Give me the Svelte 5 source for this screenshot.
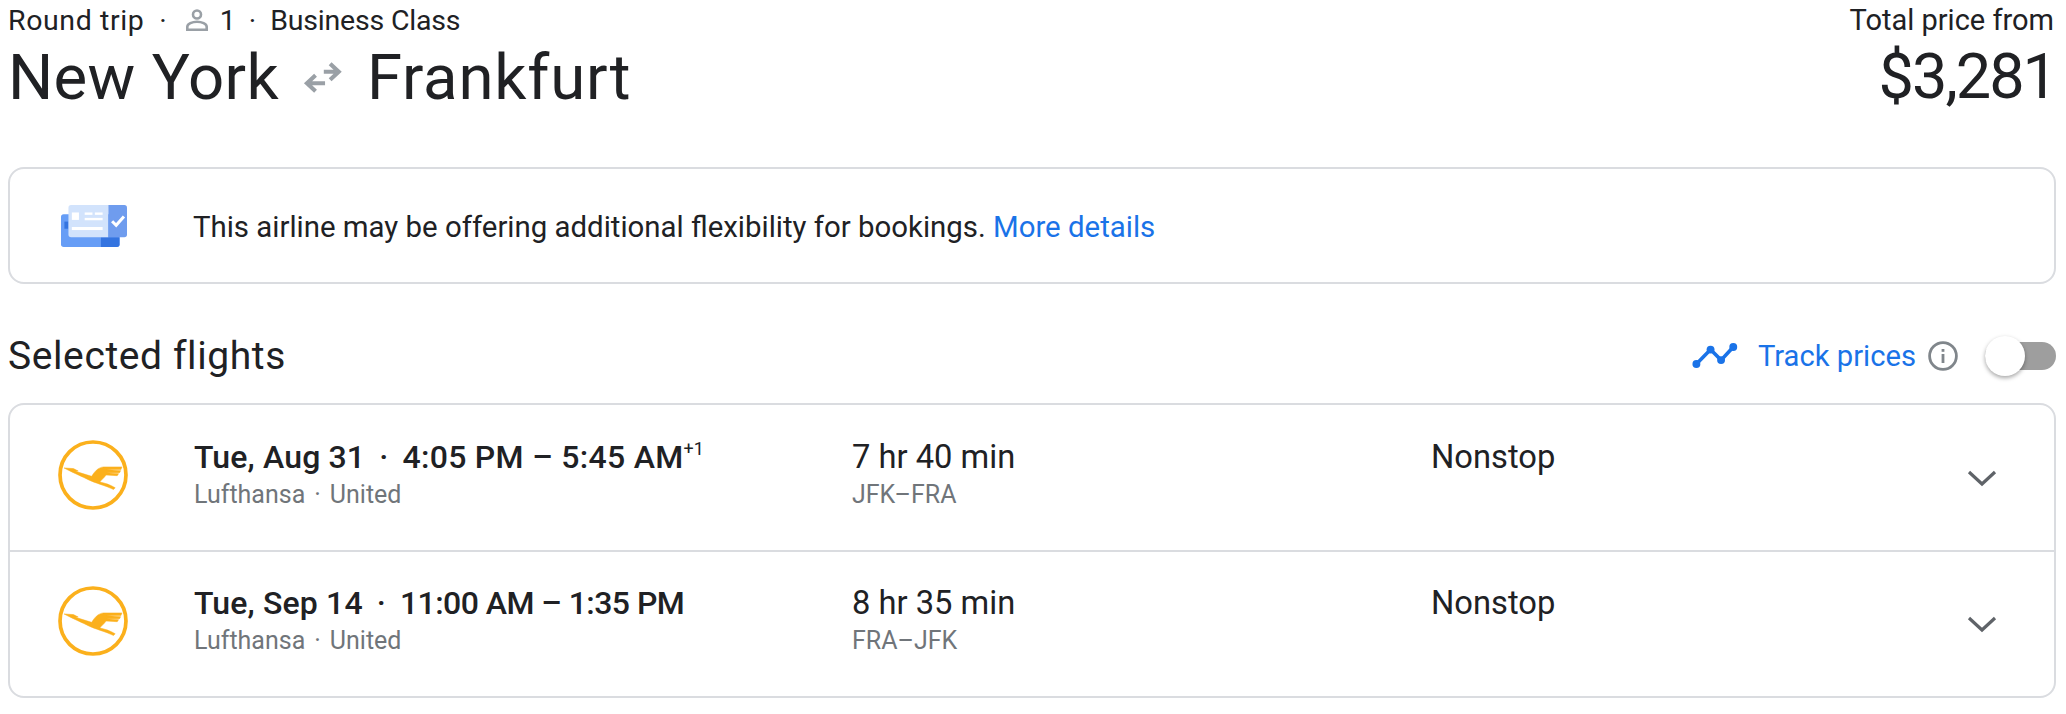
<script>
  const flights = [
    { date: 'Tue, Aug 31', dep: '4:05 PM', arr: '5:45 AM', plus: '+1', dur: '7 hr 40 min', route: 'JFK–FRA', time: 'wide' },
    { date: 'Tue, Sep 14', dep: '11:00 AM', arr: '1:35 PM', plus: '', dur: '8 hr 35 min', route: 'FRA–JFK', time: 'tight' }
  ];
</script>

<div class="page">
  <header class="head">
    <div>
      <div class="meta">
        <span class="trip">Round trip</span><span class="dot first">·</span>
        <svg class="person" viewBox="0 0 22 22" aria-hidden="true"><circle cx="11" cy="5.5" r="4" fill="none" stroke="#9aa0a6" stroke-width="2.6"/><path d="M1.3 20.7v-3c0-3 5-5 9.7-5s9.7 2 9.7 5v3z" fill="none" stroke="#9aa0a6" stroke-width="2.6"/></svg>
        <span>1</span><span class="dot">·</span><span class="cabin">Business Class</span>
      </div>
      <h1 class="title">
        <span class="origin">New York</span>
        <svg class="swap" viewBox="395 188 125 104" aria-hidden="true"><g fill="none" stroke="#9aa0a6" stroke-width="13"><path d="M460 222h46M480 197l27 25-27 25"/><path d="M464 258h-55M434 233l-27 25 27 25"/></g></svg>
        <span class="city">Frankfurt</span>
      </h1>
    </div>
    <div class="total">
      <div class="total-label">Total price from</div>
      <div class="price">$3,281</div>
    </div>
  </header>

  <section class="notice">
    <svg class="ticket" viewBox="65 48 195 124" aria-hidden="true">
      <rect x="65" y="75" width="173" height="97" rx="8" fill="#669df6"/>
      <path d="M183 143h55v21a8 8 0 0 1-8 8h-47z" fill="#3474e0"/>
      <rect x="75" y="97" width="12" height="21" fill="#3474e0"/>
      <path d="M95 48h110v95H95a8 8 0 0 1-8-8V56a8 8 0 0 1 8-8z" fill="#d2e3fc"/>
      <path d="M205 48h47a8 8 0 0 1 8 8v79a8 8 0 0 1-8 8h-47z" fill="#6f9cee"/>
      <rect x="97" y="70" width="21" height="22" fill="#fff"/>
      <rect x="135" y="70" width="23" height="7" fill="#fff"/><rect x="165" y="70" width="23" height="7" fill="#fff"/>
      <rect x="135" y="86" width="53" height="7" fill="#fff"/>
      <rect x="97" y="113" width="91" height="9" fill="#fff"/>
      <path d="M216 96l12 12 23-26" fill="none" stroke="#fff" stroke-width="9"/>
    </svg>
    <p>This airline may be offering additional flexibility for bookings. <a href="#details">More details</a></p>
  </section>

  <div class="section-head">
    <h2>Selected flights</h2>
    <div class="track">
      <svg class="graph" viewBox="30 38 140 76" aria-hidden="true"><g fill="#1a73e8"><path d="M45 102L88 58l32 32 37-40" fill="none" stroke="#1a73e8" stroke-width="11"/><circle cx="45" cy="102" r="12"/><circle cx="88" cy="58" r="12"/><circle cx="120" cy="90" r="12"/><circle cx="157" cy="50" r="12"/></g></svg>
      <span class="track-label">Track prices</span>
      <svg class="info" viewBox="0 0 30 30" aria-hidden="true"><circle cx="15" cy="15" r="13.4" fill="none" stroke="#80868b" stroke-width="2.8"/><rect x="13.6" y="13" width="2.8" height="9" fill="#80868b"/><rect x="13.6" y="8" width="2.8" height="2.8" fill="#80868b"/></svg>
      <span class="toggle"><span class="thumb"></span></span>
    </div>
  </div>

  <section class="list">
    {#each flights as f}
      <div class="row">
        <svg class="logo" viewBox="0 0 208 208" aria-hidden="true">
          <ellipse cx="104" cy="104" rx="98" ry="98" fill="#fff" stroke="#fbb01c" stroke-width="11"/>
          <path d="M18 83l28 2 14 7-8 1 48 15c8-13 18-26 35-28h55l-3 8h-44l43 3-3 6h-40l37 3-4 6-33-2c-8 11-18 18-18 21 15 3 30 8 45 17l-5 5c-25-12-55-19-75-29C75 110 50 100 18 83z" fill="#fbb01c" stroke="#fbb01c" stroke-width="1.5"/>
        </svg>
        <div class="when">
          <div class="strong">{f.date}<span class="sep">·</span><span class={f.time}>{f.dep} – {f.arr}</span>{#if f.plus}<sup>{f.plus}</sup>{/if}</div>
          <div class="sub">Lufthansa<span class="subdot">·</span>United</div>
        </div>
        <div class="dur">
          <div class="reg">{f.dur}</div>
          <div class="sub">{f.route}</div>
        </div>
        <div class="stops reg">Nonstop</div>
        <svg class="chev" viewBox="0 0 30 18" aria-hidden="true"><path d="M2 3l13 12L28 3" fill="none" stroke="#5f6368" stroke-width="3.2"/></svg>
      </div>
    {/each}
  </section>
</div>

<style>
  :global(body) { margin: 0; background: #fff; }
  .page { padding: 0 10px 0 8px; font-family: Roboto, "Noto Sans", sans-serif; color: #202124; height: 714px; box-sizing: border-box; overflow: hidden; }
  .head { display: flex; justify-content: space-between; height: 167px; }
  .meta { display: flex; align-items: center; height: 40px; font-size: 28.5px; }
  .trip { letter-spacing: .6px; }
  .cabin { letter-spacing: -.2px; }
  .dot { margin: 0 14px 0 13px; }
  .dot.first { margin: 0 19px 0 15px; }
  .person { width: 22px; height: 22px; margin-right: 12px; }
  .title { display: flex; align-items: center; margin: 0; height: 74px; font-size: 63.5px; font-weight: 400; }
  .origin { letter-spacing: .3px; }
  .city { letter-spacing: .8px; }
  .swap { width: 40px; height: 33px; margin: 0 24px; }
  .total { text-align: right; }
  .total-label { font-size: 29px; height: 40px; line-height: 40px; padding-right: 2px; }
  .price { font-size: 63px; letter-spacing: -2px; height: 74px; line-height: 74px; }
  .notice { display: flex; align-items: center; height: 117px; box-sizing: border-box; border: 2px solid #dadce0; border-radius: 16px; }
  .ticket { width: 66px; height: 42px; margin: 0 66px 0 51px; }
  .notice p { margin: 2px 0 0; font-size: 29.4px; }
  .notice a { color: #1a73e8; text-decoration: none; }
  .section-head { display: flex; justify-content: space-between; align-items: center; height: 119px; box-sizing: border-box; padding-top: 24px; }
  h2 { margin: 0; font-size: 39px; font-weight: 400; letter-spacing: .6px; }
  .track { display: flex; align-items: center; }
  .graph { width: 47px; height: 25px; margin-right: 20px; }
  .track-label { color: #1a73e8; font-size: 29.2px; }
  .info { width: 30px; height: 30px; margin: 0 27px 0 12px; }
  .toggle { display: block; width: 71px; height: 28px; background: #9e9e9e; border-radius: 14px; position: relative; }
  .thumb { position: absolute; left: 0; top: -6px; width: 40px; height: 40px; border-radius: 50%; background: #fff; box-shadow: 0 2px 4px rgba(0,0,0,.35); }
  .list { border: 2px solid #dadce0; border-radius: 16px; }
  .row { display: grid; grid-template-columns: 184px 658px 579px 1fr auto; height: 145px; box-sizing: border-box; }
  .row + .row { border-top: 2px solid #dadce0; height: 146px; padding-top: 1px; }
  .logo { width: 70px; height: 70px; margin: 35px 0 0 48px; }
  .row + .row .logo { margin-top: 33px; }
  .when, .dur, .stops { padding-top: 32px; }
  .row + .row .when, .row + .row .dur, .row + .row .stops { padding-top: 30px; }
  .strong { font-size: 32px; font-weight: 500; line-height: 41px; letter-spacing: .15px; white-space: nowrap; }
  .wide { letter-spacing: .3px; }
  .tight { letter-spacing: -.55px; }
  .sep { margin: 0 14px; }
  sup { font-size: 18px; line-height: 0; vertical-align: 13px; font-weight: 400; }
  .sub { font-size: 25px; color: #70757a; line-height: 32px; margin-top: 1px; }
  .subdot { margin: 0 9px; }
  .reg { font-size: 32.7px; line-height: 41px; }
  .chev { width: 30px; height: 18px; margin: 64px 57px 0 0; }
  .row + .row .chev { margin-top: 62px; }
</style>
